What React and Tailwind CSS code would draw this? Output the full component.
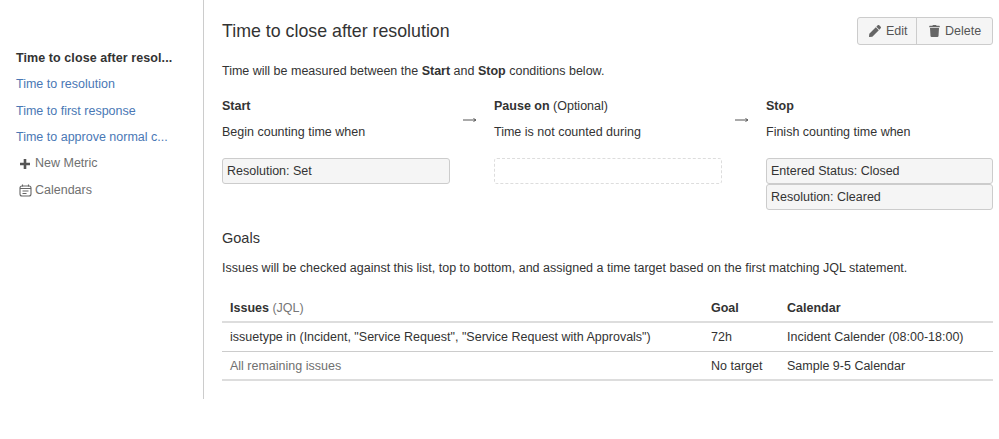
import React from "react";
import { FaPen, FaTrash } from "react-icons/fa";

const Arrow = () => (
  <div className="w-[44px] shrink-0 flex justify-center pt-[18px]">
    <svg width="14" height="8" viewBox="0 0 14 8" className="mr-[4px]">
      <path d="M0 4H12.5M10.5 2.5L13 4L10.5 5.5" fill="none" stroke="#555" strokeWidth="1" />
    </svg>
  </div>
);

const Chip = ({ children }) => (
  <div className="h-[26px] leading-[24px] px-[4px] bg-[#f5f5f5] border border-[#ccc] rounded-[3px] text-[#333]">{children}</div>
);

const Col = ({ head, sub, children, last }) => (
  <div className={last ? "w-[227px] shrink-0" : "w-[228px] shrink-0"}>
    <div className="h-[16px] leading-[16px] text-[#333]">{head}</div>
    <div className="mt-[10px] h-[16px] leading-[16px] text-[#333]">{sub}</div>
    <div className="mt-[18px] flex flex-col">{children}</div>
  </div>
);

export default function App() {
  return (
    <div className="flex w-[999px] h-[439px] bg-white text-[12.5px] text-[#333]" style={{ fontFamily: '"Liberation Sans", Arial, sans-serif' }}>
      <aside className="w-[204px] h-[399px] shrink-0 border-r border-[#ccc] pt-[44.5px] pl-[16px]">
        <div className="h-[26.5px] leading-[26.5px] font-bold text-[#333] tracking-[0.08px]">Time to close after resol...</div>
        <div className="h-[26.5px] leading-[26.5px] text-[#4a78b5]">Time to resolution</div>
        <div className="h-[26.5px] leading-[26.5px] text-[#4a78b5]">Time to first response</div>
        <div className="h-[26.5px] leading-[26.5px] text-[#4a78b5]">Time to approve normal c...</div>
        <div className="h-[26.5px] flex items-center text-[#707070] pl-[3px]">
          <svg width="12" height="12" viewBox="0 0 12 12" className="mr-[4px]" fill="none" stroke="#555" strokeWidth="2.6">
            <path d="M6 1V11M1 6H11" />
          </svg>
          New Metric
        </div>
        <div className="h-[26.5px] flex items-center text-[#707070] pl-[3px]">
          <svg width="13" height="13" viewBox="0 0 13 13" className="mr-[3px]" fill="none" stroke="#666" strokeWidth="1.1">
            <rect x="1" y="2" width="11" height="10" rx="2" />
            <path d="M1 4.5H12M3.5 0.5V2.5M9.5 0.5V2.5M3.5 7H9.5M3.5 9.5H7.5" />
          </svg>
          Calendars
        </div>
      </aside>
      <main className="w-[771px] ml-[18px]">
        <div className="flex justify-between items-start pt-[17px]">
          <h1 className="text-[17.8px] leading-[26px] pt-[1px] font-normal text-[#333]">Time to close after resolution</h1>
          <div className="flex h-[28px] border border-[#ccc] rounded-[3px] bg-[#f5f5f5] text-[#555]">
            <div className="w-[59px] flex items-center pl-[11px] gap-[5px] border-r border-[#ccc]">
              <FaPen className="w-[12px] h-[12px] text-[#666]" />Edit
            </div>
            <div className="w-[75px] flex items-center pl-[12px] gap-[5px]">
              <FaTrash className="w-[11px] h-[12px] text-[#666]" />Delete
            </div>
          </div>
        </div>
        <p className="mt-[18px] h-[16px] leading-[16px]">Time will be measured between the <b>Start</b> and <b>Stop</b> conditions below.</p>
        <div className="flex mt-[19px]">
          <Col head={<b>Start</b>} sub="Begin counting time when">
            <Chip>Resolution: Set</Chip>
          </Col>
          <Arrow />
          <Col head={<><b>Pause on</b> (Optional)</>} sub="Time is not counted during">
            <div className="h-[26px] border border-dashed border-[#ddd] rounded-[3px]" />
          </Col>
          <Arrow />
          <Col last head={<b>Stop</b>} sub="Finish counting time when">
            <Chip>Entered Status: Closed</Chip>
            <Chip>Resolution: Cleared</Chip>
          </Col>
        </div>
        <h2 className="mt-[18px] text-[14.5px] leading-[20px] font-normal text-[#333]">Goals</h2>
        <p className="mt-[12px] h-[16px] leading-[16px]">Issues will be checked against this list, top to bottom, and assigned a time target based on the first matching JQL statement.</p>
        <table className="mt-[17px] w-full border-collapse table-fixed">
          <thead>
            <tr className="h-[29px] border-b-2 border-[#ddd] text-left">
              <th className="w-[489px] pl-[8px] pt-[2px] font-bold">Issues <span className="font-normal text-[#777]">(JQL)</span></th>
              <th className="w-[76px] pt-[2px] font-bold">Goal</th>
              <th className="pt-[2px] font-bold">Calendar</th>
            </tr>
          </thead>
          <tbody>
            <tr className="h-[29px] border-b border-[#ccc]">
              <td className="pl-[8px] pt-[2px]">issuetype in (Incident, "Service Request", "Service Request with Approvals")</td>
              <td className="pt-[2px]">72h</td>
              <td className="pt-[2px]">Incident Calender (08:00-18:00)</td>
            </tr>
            <tr className="h-[29px] border-b-2 border-[#ddd]">
              <td className="pl-[8px] pt-[2px] text-[#707070]">All remaining issues</td>
              <td className="pt-[2px]">No target</td>
              <td className="pt-[2px]">Sample 9-5 Calendar</td>
            </tr>
          </tbody>
        </table>
      </main>
    </div>
  );
}
